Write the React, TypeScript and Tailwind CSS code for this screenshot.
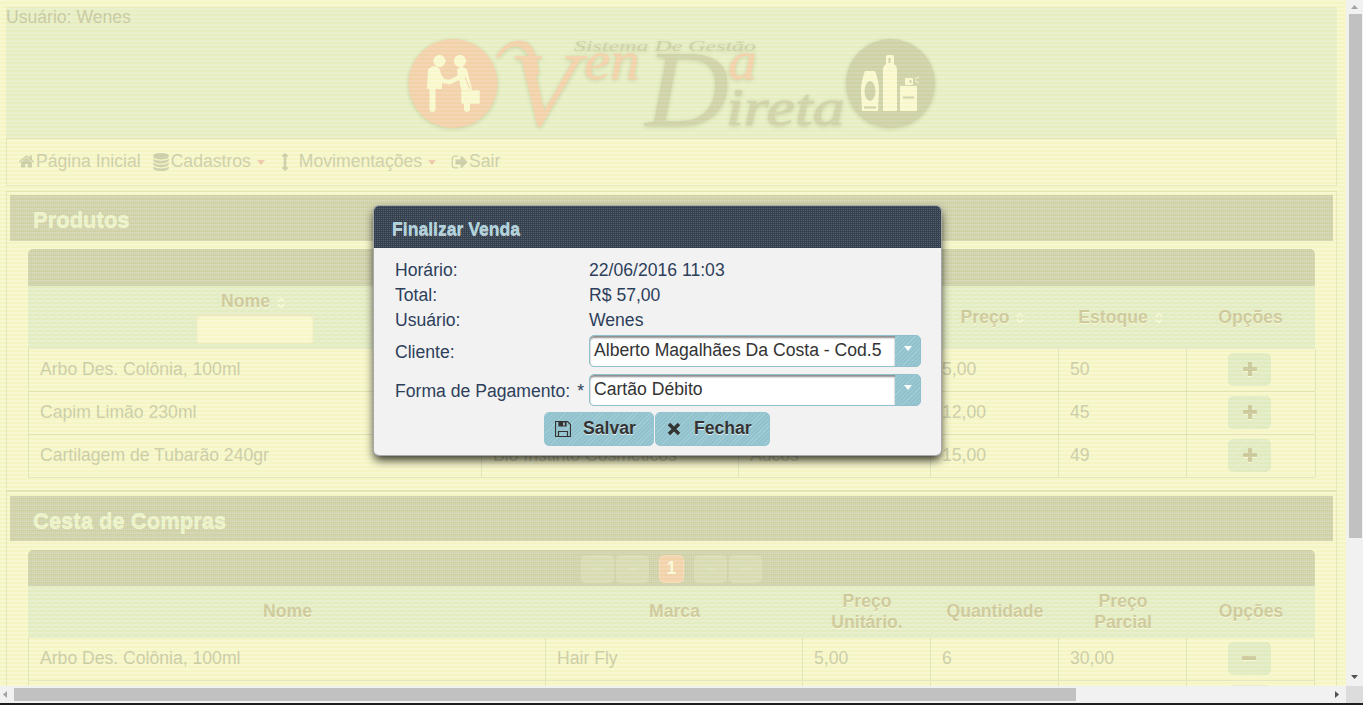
import type { ReactNode } from "react";

const HOME =
  "M1472 992v480q0 26-19 45t-45 19h-384v-384h-256v384h-384q-26 0-45-19t-19-45v-480q0-1 .5-3t.5-3l575-474 575 474q1 2 1 6zm223-69l-62 74q-8 9-21 11h-3q-13 0-21-7l-692-577-692 577q-12 8-24 7-13-2-21-11l-62-74q-8-10-7-23.5t11-21.5l719-599q32-26 76-26t76 26l244 204v-195q0-14 9-23t23-9h192q14 0 23 9t9 23v408l219 182q10 8 11 21.5t-7 23.5z";
const DATABASE =
  "M896 768q237 0 443-43t325-127v170q0 69-103 128t-280 93.5-385 34.5-385-34.5-280-93.5-103-128v-170q119 84 325 127t443 43zm0 768q237 0 443-43t325-127v170q0 69-103 128t-280 93.5-385 34.5-385-34.5-280-93.5-103-128v-170q119 84 325 127t443 43zm0-384q237 0 443-43t325-127v170q0 69-103 128t-280 93.5-385 34.5-385-34.5-280-93.5-103-128v-170q119 84 325 127t443 43zm0-1152q208 0 385 34.5t280 93.5 103 128v128q0 69-103 128t-280 93.5-385 34.5-385-34.5-280-93.5-103-128v-128q0-69 103-128t280-93.5 385-34.5z";
const SIGN_OUT =
  "M704 1440q0 4 1 20t.5 26.5-3 23.5-10 19.5-20.5 6.5h-320q-119 0-203.5-84.5t-84.5-203.5v-704q0-119 84.5-203.5t203.5-84.5h320q13 0 22.5 9.5t9.5 22.5q0 4 1 20t.5 26.5-3 23.5-10 19.5-20.5 6.5h-320q-66 0-113 47t-47 113v704q0 66 47 113t113 47h312l11.5 1 11.5 3 8 5.5 7 9 2 13.5zm928-544q0 26-19 45l-544 544q-19 19-45 19t-45-19-19-45v-288h-448q-26 0-45-19t-19-45v-384q0-26 19-45t45-19h448v-288q0-26 19-45t45-19 45 19l544 544q19 19 19 45z";
const ARROWS_V =
  "M1216 320q0 26-19 45t-45 19h-128v1024h128q26 0 45 19t19 45-19 45l-256 256q-19 19-45 19t-45-19l-256-256q-19-19-19-45t19-45 45-19h128v-1024h-128q-26 0-45-19t-19-45 19-45l256-256q19-19 45-19t45 19l256 256q19 19 19 45z";

function Glyph({ d, className }: { d: string; className: string }) {
  return (
    <svg viewBox="0 0 1792 1792" className={className} fill="currentColor">
      <path d={d} />
    </svg>
  );
}

function Logo() {
  return (
    <svg width="540" height="110" viewBox="400 30 540 110" className="block overflow-visible drop-shadow-[0_1px_2px_rgba(130,140,80,0.35)]">
      <circle cx="453" cy="83.5" r="44.5" fill="#f2cfa9" />
      <g fill="#f8f8cf" stroke="#f8f8cf" strokeLinecap="round" strokeLinejoin="round">
        <circle cx="439.5" cy="61" r="5.7" />
        <circle cx="460" cy="61" r="5.7" />
        <path d="M429 70q5-6 10 0l2 9v9h-13z" strokeWidth="2" />
        <path d="M432.500 87v22" strokeWidth="6" fill="none" />
        <path d="M438 74l5 7 7 1 8-4 4-6" strokeWidth="4.5" fill="none" />
        <path d="M458 70q4-4 8 0l5 19h-9z" strokeWidth="2" />
        <path d="M467 104v5" strokeWidth="6" fill="none" />
        <rect x="462" y="91" width="17" height="12" strokeWidth="1.5" />
      </g>
      <path d="M465 77l5 12" stroke="#f2cfa9" strokeWidth="1" />
      <path d="M496 57C505 39 526 35 533 49C537 57 538 64 539 74L533 78C531 66 532 60 526 52C519 43 507 45 499 58z" fill="#f2cfa9" />
      <g fontFamily="Liberation Serif, serif" fontStyle="italic">
        <text x="509" y="125" fontSize="106" fill="#f2cfa9" textLength="68" lengthAdjust="spacingAndGlyphs">V</text>
        <text x="584" y="79" fontSize="55" fill="#f2cfa9" stroke="#f2cfa9" strokeWidth="0.4" textLength="56" lengthAdjust="spacingAndGlyphs">en</text>
        <text x="645" y="126" fontSize="110" fill="#cdd0a6" textLength="84" lengthAdjust="spacingAndGlyphs">D</text>
        <text x="728" y="79" fontSize="55" fill="#f2cfa9" stroke="#f2cfa9" strokeWidth="0.4" textLength="29" lengthAdjust="spacingAndGlyphs">a</text>
        <text x="726" y="125" fontSize="53" fill="#cdd0a6" stroke="#cdd0a6" strokeWidth="0.6" textLength="119" lengthAdjust="spacingAndGlyphs">ireta</text>
        <text x="574" y="50.500" fontSize="14.500" fill="#c8cba2" textLength="182" lengthAdjust="spacingAndGlyphs">Sistema De Gestão</text>
      </g>
      <circle cx="890.500" cy="83.500" r="44.500" fill="#cccfa6" />
      <g fill="#f8f8cf">
        <path d="M865 71h10q4 10 4 20l-1 20h-16l-1-20q0-10 4-20z" />
        <path d="M883 111V70q0-4 3-6v-7q0-2 2-2h4q2 0 2 2v7q3 2 3 6v41z" />
        <rect x="900" y="86" width="17" height="25" rx="1" />
        <rect x="905" y="78" width="8" height="7" rx="1" />
      </g>
      <ellipse cx="870" cy="91" rx="5.500" ry="10" fill="#cccfa6" />
      <path d="M864 107.500h12M903 97.500h11M889.500 58v5M910.500 80v3" stroke="#cccfa6" strokeWidth="2" />
      <path d="M915 79l4-2M915 81l4 2" stroke="#f8f8cf" strokeWidth="1" />
    </svg>
  );
}

function Caret() {
  return (
    <svg width="8" height="5" viewBox="0 0 8 5" className="mt-[2px] ml-[6px] fill-[#ecc3a3]">
      <path d="M0 0h8L4 5z" />
    </svg>
  );
}

function Sort() {
  return (
    <svg width="8" height="12" viewBox="0 0 9 12" className="mt-[2px] mr-[3px] ml-[7px] fill-none stroke-[#f8f9d8]" strokeWidth="1.8">
      <path d="M1 4.500L4.500 1L8 4.500M1 7.500L4.500 11L8 7.500" />
    </svg>
  );
}

function SectionHead({ children, className }: { children: ReactNode; className: string }) {
  return (
    <div
      className={
        "flex items-center bg-[#d0d2ac] bg-[conic-gradient(#c6c8a0_25%,transparent_0)] bg-size-[2px_2px] pl-[23px] text-[22px] font-bold text-[#e9f2ca] [text-shadow:0_1px_0_#f6f6ca] " +
        className
      }
    >
      {children}
    </div>
  );
}

const PAGER =
  "bg-[#d0d2ac] bg-[conic-gradient(#c6c8a0_25%,transparent_0)] bg-size-[2px_2px] rounded-t-[5px] border-b border-[#cacda6]";
const THEAD =
  "grid bg-[repeating-linear-gradient(150deg,#e1ebc1_0_2px,#e5edc8_2px_4px)] text-center font-bold leading-[21px] text-[#c9c598] [text-shadow:0_1px_0_#f8f8d4] border-b border-[#e0e9c4]";
const COLS_A = "grid-cols-[453px_257px_192px_128px_128px_129px]";
const COLS_B = "grid-cols-[517px_257px_128px_128px_128px_128px]";

function HeadCell({ label, sort }: { label: string; sort?: boolean }) {
  return (
    <div className="flex items-center justify-center">
      {label}
      {sort && <Sort />}
    </div>
  );
}

function Row({ cells, cols, minus }: { cells: string[]; cols: string; minus?: boolean }) {
  return (
    <div className={"grid h-[43px] shrink-0 border-b border-l border-[#e0e2b8] text-[#c7c9a3] " + cols}>
      {cells.map((c, i) => (
        <div key={i} className="flex items-center overflow-hidden border-r border-[#e0e2b8] pb-[2px] pl-[11px] whitespace-nowrap">
          {c}
        </div>
      ))}
      <div className="-ml-px flex items-center justify-center border-r border-[#e0e2b8] pr-[2px] pb-[2px]">
        <div className="flex h-[33px] w-[43px] items-center justify-center rounded-[5px] bg-[repeating-linear-gradient(135deg,#dfe9bf_0_2px,#e3ecc7_2px_3px)]">
          <svg width="14" height="14" viewBox="0 0 14 14" className="fill-[#c8c598] drop-shadow-[0_1px_0_#f8f8d4]">
            <rect x="0" y="5" width="14" height="4" rx="0.5" />
            {!minus && <rect x="5" y="0" width="4" height="14" rx="0.5" />}
          </svg>
        </div>
      </div>
    </div>
  );
}

function Field({ value }: { value: string }) {
  return (
    <div className="flex h-8 w-[332px] overflow-hidden rounded-[5px] border border-[#90c0cb] bg-[#90c0cb]">
      <div className="w-[305px] rounded-l-[4px] bg-white pl-[4px] leading-[29px] whitespace-nowrap text-[#333] shadow-[inset_0_2px_2px_#8c8c8c]">
        {value}
      </div>
      <div className="flex flex-1 justify-center bg-[repeating-linear-gradient(135deg,#92c2cd_0_2px,#9fccd5_2px_3px)] pt-[10px]">
        <svg width="8" height="5" viewBox="0 0 8 5" className="fill-white">
          <path d="M0 0h8L4 5z" />
        </svg>
      </div>
    </div>
  );
}

const BUTTON =
  "flex h-[34px] items-center rounded-[5px] border border-[#93c3ce] bg-[repeating-linear-gradient(135deg,#92c2cd_0_2px,#9fccd5_2px_3px)] font-bold text-[#333] [text-shadow:0_1px_0_rgba(255,255,255,0.7)]";

function PagerButton({ last, flip }: { last?: boolean; flip?: boolean }) {
  return (
    <div className="flex h-7 w-[33px] items-center justify-center rounded-[5px] bg-[#d6dab2]">
      <svg width="12" height="5" viewBox="0 0 12 6" className={"fill-[#dbdfb7] " + (flip ? "rotate-180" : "")}>
        <path d="M6 0v6L1 3zM11 0v6L6 3z" />
        {last && <rect x="0" y="0" width="1" height="6" />}
      </svg>
    </div>
  );
}

export default function App() {
  return (
    <div className="flex h-[705px] w-[1363px] flex-col overflow-hidden font-['Liberation_Sans',Arial,sans-serif] text-[17.6px] leading-[21px]">
      <div className="flex h-[686px]">
        <main className="relative h-[686px] w-[1346px] overflow-hidden bg-[#f6f6c9] pt-[7px] pl-[6px]">
          <header className="h-[131px] w-[1331px] bg-[#e6eec5]">
            <div className="h-[23px] leading-[20px] text-[#c4c59e]">Usuário: Wenes</div>
            <div className="pl-[394px]">
              <Logo />
            </div>
          </header>
          <nav className="flex h-[48px] w-[1331px] border border-[#e2e4ba] pb-px pl-[11px] text-[#c8cba5]">
            <div className="flex items-center">
              <Glyph d={HOME} className="mr-px h-[17px] w-[17px]" />
              <span>Página Inicial</span>
            </div>
            <div className="ml-[11px] flex items-center">
              <Glyph d={DATABASE} className="mr-px h-[18px] w-[18px]" />
              <span>Cadastros</span>
              <Caret />
            </div>
            <div className="ml-[11px] flex items-center">
              <Glyph d={ARROWS_V} className="h-[18px] w-[18px]" />
              <span className="ml-[5px]">Movimentações</span>
              <Caret />
            </div>
            <div className="ml-[15px] flex items-center">
              <Glyph d={SIGN_OUT} className="h-[18px] w-[18px]" />
              <span>Sair</span>
            </div>
          </nav>
          <section className="mt-[5px] h-[300px] w-[1331px] border border-[#e2e4ba] px-[3px] pt-[3px]">
            <SectionHead className="h-[46px] pt-[3px]">Produtos</SectionHead>
            <div className="mt-2 ml-[18px] w-[1287px]">
              <div className={"h-[37px] " + PAGER} />
              <div className={"h-[63px] " + THEAD + " " + COLS_A}>
                <div className="flex flex-col items-center pt-[5px]">
                  <div className="flex items-center">
                    Nome
                    <Sort />
                  </div>
                  <div className="mt-[2px] h-[30px] w-[118px] rounded-[4px] border border-[#ebeac0] bg-[#f8f7cd] shadow-[inset_0_1px_2px_#e3e2b8]" />
                </div>
                <div />
                <div />
                <HeadCell label="Preço" sort />
                <HeadCell label="Estoque" sort />
                <HeadCell label="Opções" />
              </div>
              <Row cols={COLS_A} cells={["Arbo Des. Colônia, 100ml", "", "", "5,00", "50"]} />
              <Row cols={COLS_A} cells={["Capim Limão 230ml", "", "", "12,00", "45"]} />
              <Row cols={COLS_A} cells={["Cartilagem de Tubarão 240gr", "Bio Instinto Cosméticos", "Adcos", "15,00", "49"]} />
            </div>
          </section>
          <section className="h-[300px] w-[1331px] border border-[#e2e4ba] px-[3px] pt-[4px]">
            <SectionHead className="h-[45px] pt-[4px]">Cesta de Compras</SectionHead>
            <div className="mt-[9px] ml-[18px] w-[1287px]">
              <div className={"flex h-9 items-center justify-center gap-[2px] pt-[2px] " + PAGER}>
                <PagerButton last />
                <PagerButton />
                <div className="mx-[8px] flex h-7 w-[25px] items-center justify-center rounded-[5px] border border-[#f6dab5] bg-[#f2d0aa] font-bold text-[#f9f8d8]">
                  1
                </div>
                <PagerButton flip />
                <PagerButton last flip />
              </div>
              <div className={"h-[52px] pl-px " + THEAD + " " + COLS_B}>
                <HeadCell label="Nome" />
                <HeadCell label="Marca" />
                <div className="flex flex-col justify-center">
                  <span>Preço</span>
                  <span>Unitário.</span>
                </div>
                <HeadCell label="Quantidade" />
                <div className="flex flex-col justify-center">
                  <span>Preço</span>
                  <span>Parcial</span>
                </div>
                <HeadCell label="Opções" />
              </div>
              <Row cols={COLS_B} minus cells={["Arbo Des. Colônia, 100ml", "Hair Fly", "5,00", "6", "30,00"]} />
              <Row cols={COLS_B} minus cells={["", "", "", "", ""]} />
            </div>
          </section>

          <div className="absolute inset-0 bg-[repeating-linear-gradient(180deg,rgba(255,255,255,0.14)_0_2px,rgba(240,240,150,0.09)_2px_4px)]" />

          <div className="absolute top-[206px] left-[374px] h-[249px] w-[567px] rounded-[5px] bg-[#f2f2f2] text-[#2e3f5b] shadow-[0_0_0_1px_#a8a8a8,0_5px_10px_rgba(0,0,0,0.8)]">
            <div className="h-[42px] rounded-t-[5px] bg-[#35414f] bg-[conic-gradient(#56626f_25%,transparent_0)] bg-size-[2px_2px] pt-[13px] pl-[18px] font-bold text-[#aed3dd] [text-shadow:0_1px_0_rgba(255,255,255,0.7)]">
              Finalizar Venda
            </div>
            <div className="grid grid-cols-[194px_332px] pt-[10px] pl-[21px] leading-[25px]">
              <div>Horário:</div>
              <div>22/06/2016 11:03</div>
              <div>Total:</div>
              <div>R$ 57,00</div>
              <div>Usuário:</div>
              <div>Wenes</div>
              <div className="pt-[7px]">Cliente:</div>
              <div className="h-[39px] pt-[2px]">
                <Field value="Alberto Magalhães Da Costa - Cod.5" />
              </div>
              <div className="flex justify-between pt-[7px] pr-[5px]">
                <span>Forma de Pagamento:</span>
                <span>*</span>
              </div>
              <div className="h-[39px] pt-[2px]">
                <Field value="Cartão Débito" />
              </div>
            </div>
            <div className="mt-px flex gap-px pl-[170px]">
              <div className={"w-[110px] pl-[10px] " + BUTTON}>
                <svg width="16" height="16" viewBox="0 0 16 16" className="fill-none stroke-[#333]" strokeWidth="1.2">
                  <path d="M.5 .5h12l3 3v12H.5zM3.500 15.500v-5h9v5" />
                  <path d="M4 1h7v4H4z" fill="#333" />
                  <path d="M9 1.500v3" stroke="#c8e1e6" strokeWidth="1.500" />
                </svg>
                <span className="ml-[12px] pb-[2px]">Salvar</span>
              </div>
              <div className={"w-[115px] pl-[11px] " + BUTTON}>
                <svg width="14" height="14" viewBox="0 0 14 14" className="stroke-[#333]" strokeWidth="3.4">
                  <path d="M2 2l10 10M12 2L2 12" />
                </svg>
                <span className="ml-[13px] pb-[2px]">Fechar</span>
              </div>
            </div>
          </div>
        </main>
        <div className="flex w-[17px] flex-col items-center bg-[#f1f1f1]">
          <div className="flex h-[14px] items-center">
            <svg width="7" height="4" viewBox="0 0 7 4" className="fill-[#a3a3a3]">
              <path d="M0 4h7L3.500 0z" />
            </svg>
          </div>
          <div className="ml-px h-[524px] w-[13px] bg-[#c1c1c1]" />
          <svg width="7" height="4" viewBox="0 0 7 4" className="mt-[137px] fill-[#505050]">
            <path d="M0 0h7L3.500 4z" />
          </svg>
        </div>
      </div>
      <div className="flex h-[17px] items-center bg-[#f1f1f1]">
        <svg width="4" height="7" viewBox="0 0 4 7" className="ml-[3px] fill-[#a3a3a3]">
          <path d="M4 0v7L0 3.500z" />
        </svg>
        <div className="ml-[7px] h-[13px] w-[1062px] bg-[#c1c1c1]" />
        <svg width="4" height="7" viewBox="0 0 4 7" className="ml-[259px] fill-[#505050]">
          <path d="M0 0v7L4 3.500z" />
        </svg>
        <div className="ml-auto h-[17px] w-[17px] bg-[#dcdcdc]" />
      </div>
      <div className="h-[2px] bg-[#1f1f1f]" />
    </div>
  );
}
